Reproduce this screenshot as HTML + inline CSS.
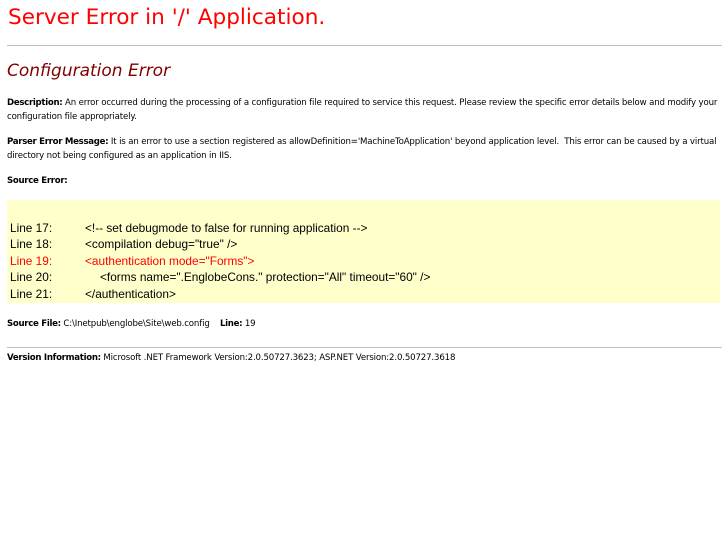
<!DOCTYPE html>
<html><head><style>
body{margin:0;background:#fff;font-family:"DejaVu Sans","Liberation Sans",sans-serif;color:#000;width:727px;height:545px;position:relative;overflow:hidden}
.a{position:absolute;white-space:nowrap}
h1{position:absolute;left:8px;top:5px;margin:0;font-weight:normal;font-size:21.6px;color:#f00;font-family:"DejaVu Sans",sans-serif;white-space:nowrap}
h2{position:absolute;left:7px;top:61px;margin:0;font-weight:normal;font-style:italic;font-size:17px;color:#800000;white-space:nowrap}
.hr{position:absolute;left:7px;width:715px;height:1px;background:#c0c0c0}
.s{font-size:8.6px;letter-spacing:-0.15px;line-height:14px}
.s b{letter-spacing:-0.3px}
.code{position:absolute;left:7px;top:200px;width:713px;height:103px;background:#ffffcc;font-family:"Liberation Sans",sans-serif;font-size:11.85px}
.code div{position:absolute;white-space:nowrap}
</style></head><body>
<h1>Server Error in '/' Application.</h1>
<div class="hr" style="top:45px"></div>
<h2>Configuration Error</h2>
<div class="a s" style="left:7px;top:96px"><b>Description:</b> An error occurred during the processing of a configuration file required to service this request. Please review the specific error details below and modify your<br>configuration file appropriately.</div>
<div class="a s" style="left:7px;top:135px"><b>Parser Error Message:</b> It is an error to use a section registered as allowDefinition='MachineToApplication' beyond application level.&nbsp; This error can be caused by a virtual<br>directory not being configured as an application in IIS.</div>
<div class="a s" style="left:7px;top:174px"><b>Source Error:</b></div>
<div class="code">
<div style="left:3px;top:21px">Line 17:</div><div style="left:78px;top:21px">&lt;!-- set debugmode to false for running application --&gt;</div>
<div style="left:3px;top:37px">Line 18:</div><div style="left:78px;top:37px">&lt;compilation debug="true" /&gt;</div>
<div style="left:3px;top:54px;color:#f00">Line 19:</div><div style="left:78px;top:54px;color:#f00">&lt;authentication mode="Forms"&gt;</div>
<div style="left:3px;top:70px">Line 20:</div><div style="left:93px;top:70px">&lt;forms name=".EnglobeCons." protection="All" timeout="60" /&gt;</div>
<div style="left:3px;top:87px">Line 21:</div><div style="left:78px;top:87px">&lt;/authentication&gt;</div>
</div>
<div class="a s" style="left:7px;top:317px"><b>Source File:</b> C:\Inetpub\englobe\Site\web.config &nbsp;&nbsp; <b>Line:</b> 19</div>
<div class="hr" style="top:347px"></div>
<div class="a s" style="left:7px;top:351px"><b>Version Information:</b> Microsoft .NET Framework Version:2.0.50727.3623; ASP.NET Version:2.0.50727.3618</div>
</body></html>
